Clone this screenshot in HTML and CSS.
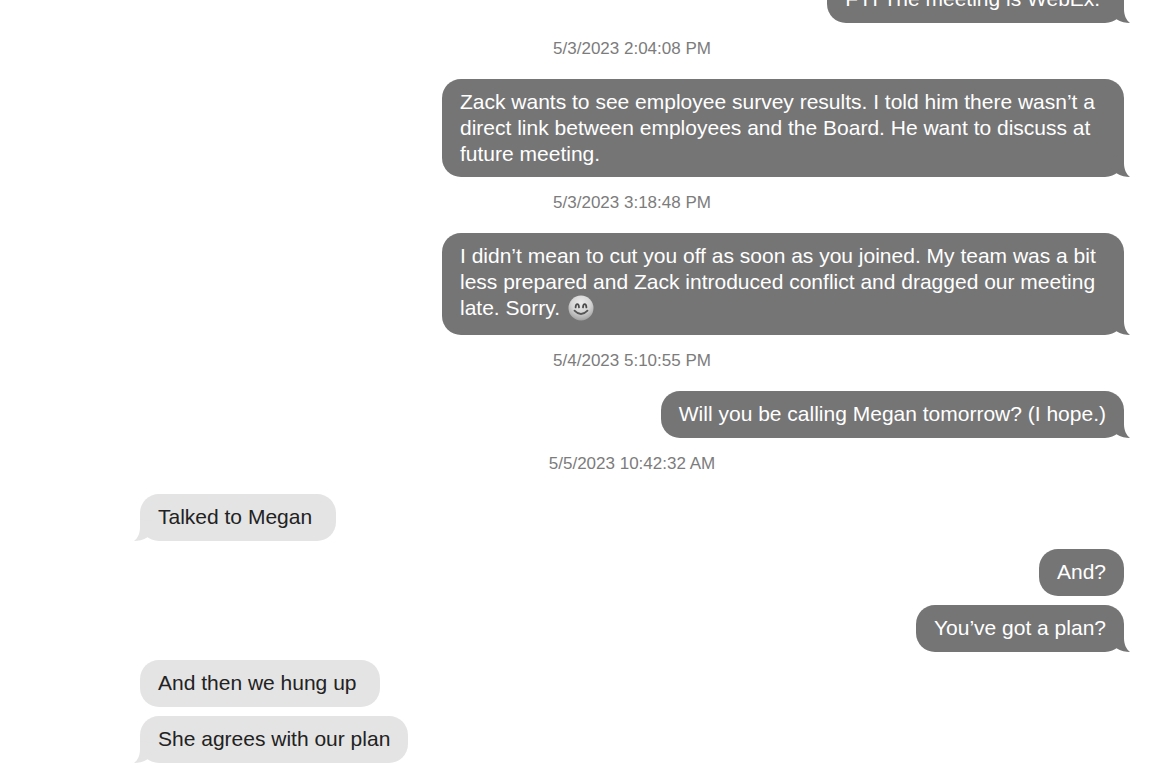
FILE: index.html
```html
<!doctype html>
<html lang="en">
<head>
	<title>Messages</title>
	<meta charset="utf-8">
	<link rel="stylesheet" href="styles.css">
</head>
<body>
	<main class="thread">
		<div class="group sent">
			<p class="bubble tail">FYI The meeting is WebEx.&nbsp;</p>
		</div>
		<time class="date">5/3/2023 2:04:08 PM</time>
		<div class="group sent">
			<p class="bubble tail">Zack wants to see employee survey results. I told him there wasn’t a direct link between employees and the Board. He want to discuss at future meeting.</p>
		</div>
		<time class="date">5/3/2023 3:18:48 PM</time>
		<div class="group sent">
			<p class="bubble tail">I didn’t mean to cut you off as soon as you joined. My team was a bit less prepared and Zack introduced conflict and dragged our meeting late. Sorry.
				<svg class="emoji" viewBox="0 0 26 26" role="img" aria-label="smiling face">
					<defs>
						<radialGradient id="face" cx=".5" cy=".3" r=".75">
							<stop offset="0" stop-color="#ececec"/>
							<stop offset=".5" stop-color="#d6d6d6"/>
							<stop offset="1" stop-color="#9a9a9a"/>
						</radialGradient>
					</defs>
					<circle cx="13" cy="13" r="12.5" fill="url(#face)"/>
					<path d="M7.6 12.4C7.9 8 10.7 8 11 12.4M15 12.4C15.3 8 18.1 8 18.4 12.4" fill="none" stroke="#4c4c4c" stroke-width="1.8" stroke-linecap="round"/>
					<path d="M6.5 15.6Q13 22.4 19.5 15.6" fill="none" stroke="#565656" stroke-width="1.8" stroke-linecap="round"/>
				</svg>
			</p>
		</div>
		<time class="date">5/4/2023 5:10:55 PM</time>
		<div class="group sent">
			<p class="bubble tail">Will you be calling Megan tomorrow? (I hope.)</p>
		</div>
		<time class="date">5/5/2023 10:42:32 AM</time>
		<div class="group received">
			<p class="bubble tail">Talked to Megan&nbsp;</p>
		</div>
		<div class="group sent">
			<p class="bubble">And?</p>
			<p class="bubble tail">You’ve got a plan?</p>
		</div>
		<div class="group received">
			<p class="bubble">And then we hung up&nbsp;</p>
			<p class="bubble tail">She agrees with our plan</p>
		</div>
	</main>
</body>
</html>
```
FILE: styles.css
```css
body {
	margin: 0;
	background: #fff;
	font-family: "Liberation Sans", Arial, sans-serif;
	overflow: hidden;
}
.thread {
	display: flex;
	flex-direction: column;
	/* scrolled so the oldest message is cut by the top edge */
	margin-top: -24px;
	padding: 0 28px 0 140px;
}
.group {
	display: flex;
	flex-direction: column;
	gap: 9px;
}
.group + .group {
	margin-top: 8px;
}
.sent {
	align-items: flex-end;
}
.received {
	align-items: flex-start;
}
.bubble {
	position: relative;
	box-sizing: border-box;
	max-width: 682px;
	min-height: 47px;
	margin: 0;
	padding: 10px 18px;
	border-radius: 19px;
	font-size: 21px;
	line-height: 26px;
}
.sent .bubble {
	background: #757575;
	color: #fff;
}
.received .bubble {
	background: #e4e4e4;
	color: #222;
}
.tail::after {
	content: "";
	position: absolute;
	right: -6px;
	bottom: 0;
	width: 20px;
	height: 24px;
	background: #757575;
	clip-path: path("M0 4 L14 2 V10 C14 16 16 21 20 24 C16 24 11 23 6 20 L0 14 Z");
}
.received .tail::after {
	right: auto;
	left: -6px;
	background: #e4e4e4;
	transform: scaleX(-1);
}
.date {
	text-align: center;
	color: #7c7c7c;
	font-size: 17px;
	line-height: 20px;
	padding: 16px 0 20px;
}
.emoji {
	width: 26px;
	height: 26px;
	margin: 0 0 4px 2px;
	vertical-align: -10px;
}
```
